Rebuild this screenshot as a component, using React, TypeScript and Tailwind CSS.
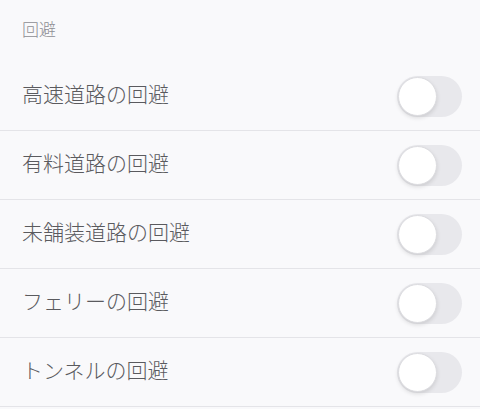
import { useState } from "react";

const items = [
    "高速道路の回避",
    "有料道路の回避",
    "未舗装道路の回避",
    "フェリーの回避",
    "トンネルの回避",
];

function Toggle({ on, onChange }: { on: boolean; onChange: () => void }) {
    return (
        <button
            type="button"
            onClick={onChange}
            className={`relative h-[41px] w-[65px] rounded-full transition-colors ${on ? "bg-[#4cd964]" : "bg-[#e8e8ec]"}`}
        >
            <span
                className={`absolute top-[1px] h-[39px] w-[39px] rounded-full border border-[#dcdce0] bg-white shadow-[0_2px_4px_rgba(0,0,0,0.12)] transition-all ${on ? "left-[25px]" : "left-[1px]"}`}
            />
        </button>
    );
}

export default function App() {
    const [state, setState] = useState<boolean[]>(items.map(() => false));

    return (
        <div
            className="min-h-[409px] w-[480px] bg-[#f9f9fb] text-[#5a5a5e]"
            style={{ fontFamily: '"Noto Sans CJK JP", "Noto Sans", sans-serif' }}
        >
            <div className="h-[62px] pl-[22px] pt-[18px] text-[17px] font-light leading-[22px] text-[#8e8e93]">
                回避
            </div>
            {items.map((label, i) => (
                <div
                    key={label}
                    className="flex h-[69px] items-center justify-between border-b border-[#e4e4e8] pl-[22px] pr-[18px]"
                >
                    <span className="pb-[5px] text-[21px] font-light leading-none">{label}</span>
                    <Toggle
                        on={state[i]}
                        onChange={() => setState(state.map((v, j) => (j === i ? !v : v)))}
                    />
                </div>
            ))}
        </div>
    );
}
